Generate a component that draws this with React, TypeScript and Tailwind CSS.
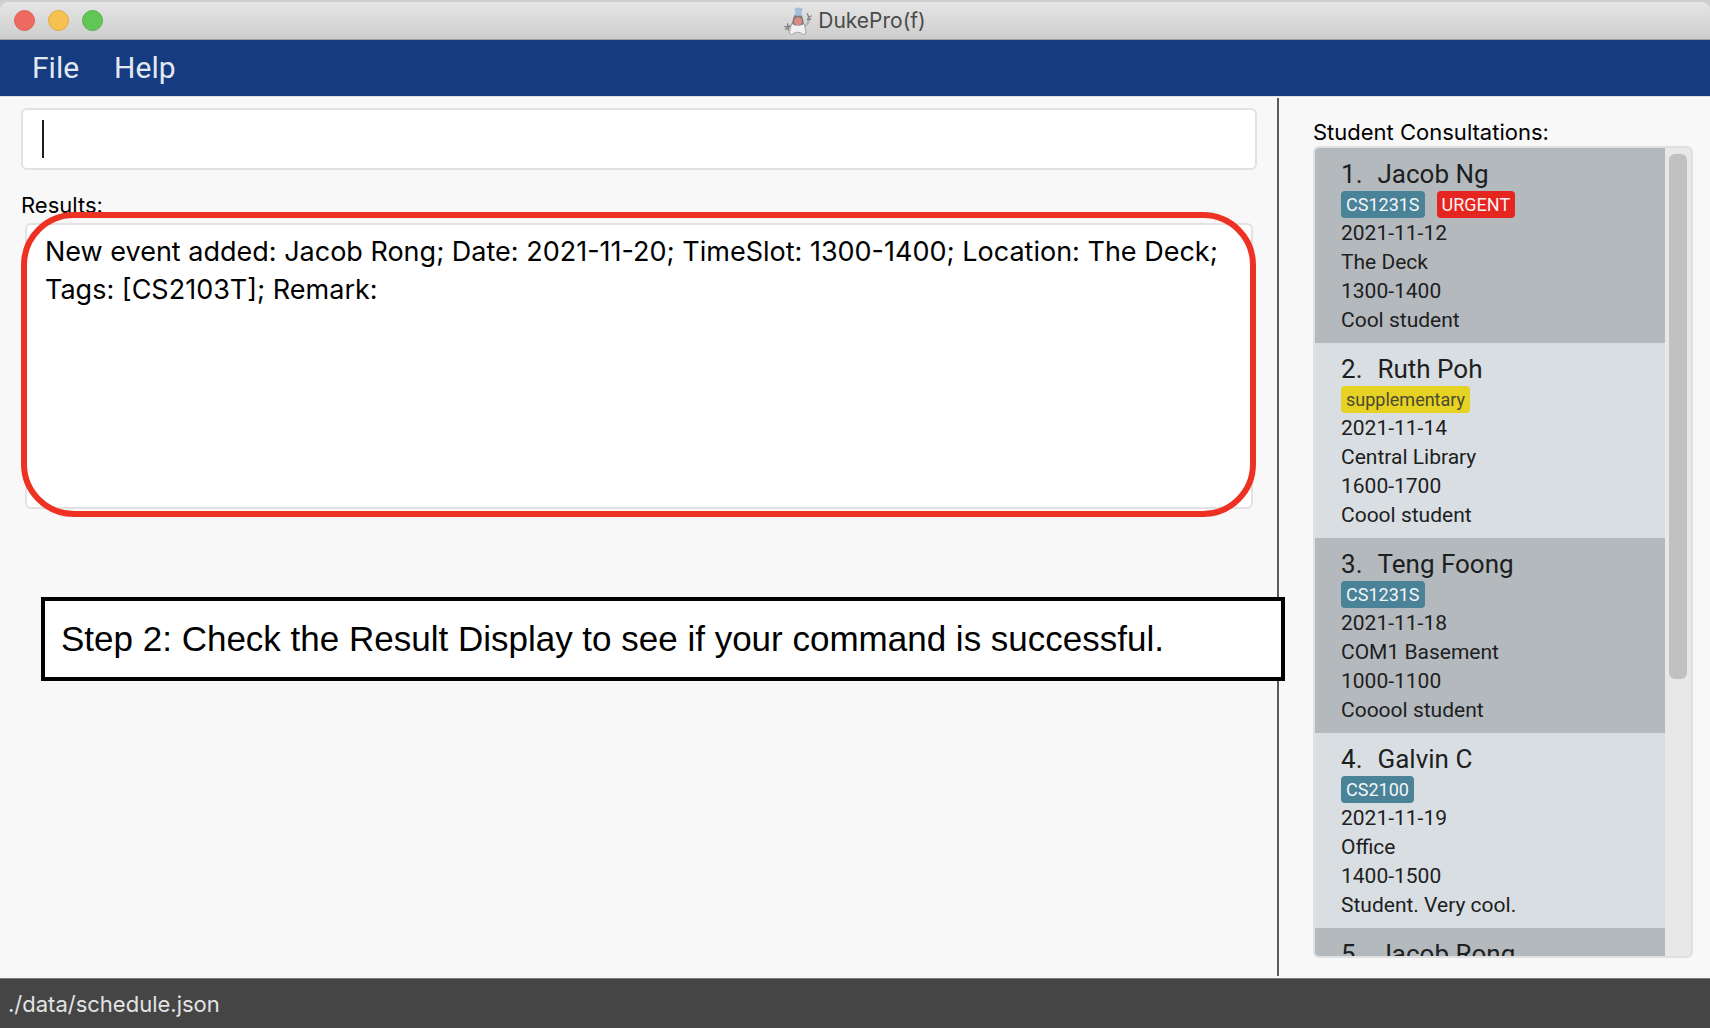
import React from "react";

type Tag = { label: string; kind: "module" | "urgent" | "extra" };
type Consultation = {
  name: string;
  tags: Tag[];
  date: string;
  place: string;
  time: string;
  remark: string;
};

const consultations: Consultation[] = [
  {
    name: "Jacob Ng",
    tags: [
      { label: "CS1231S", kind: "module" },
      { label: "URGENT", kind: "urgent" },
    ],
    date: "2021-11-12",
    place: "The Deck",
    time: "1300-1400",
    remark: "Cool student",
  },
  {
    name: "Ruth Poh",
    tags: [{ label: "supplementary", kind: "extra" }],
    date: "2021-11-14",
    place: "Central Library",
    time: "1600-1700",
    remark: "Coool student",
  },
  {
    name: "Teng Foong",
    tags: [{ label: "CS1231S", kind: "module" }],
    date: "2021-11-18",
    place: "COM1 Basement",
    time: "1000-1100",
    remark: "Cooool student",
  },
  {
    name: "Galvin C",
    tags: [{ label: "CS2100", kind: "module" }],
    date: "2021-11-19",
    place: "Office",
    time: "1400-1500",
    remark: "Student. Very cool.",
  },
  {
    name: "Jacob Rong",
    tags: [],
    date: "",
    place: "",
    time: "",
    remark: "",
  },
];

const tagStyles: Record<Tag["kind"], string> = {
  module: "bg-[#4a8297] text-[#f2f6f7]",
  urgent: "bg-[#e62420] text-[#fdf3f3]",
  extra: "bg-[#e6d222] text-[#4b4936]",
};

function DukeIcon() {
  return (
    <svg viewBox="0 0 84 84" className="size-7" aria-hidden="true">
      <path d="M60 58 C68 54 74 46 76 36" fill="none" stroke="#b4b4b4" strokeWidth="7" strokeLinecap="round" />
      <path d="M14 60 L27 50" stroke="#b4b4b4" strokeWidth="6" strokeLinecap="round" />
      <path d="M26 46 C20 56 16 70 17 81 C24 87 30 75 41 76 C53 75 58 87 65 81 C67 70 63 56 57 46 Z" fill="#f0f0f0" stroke="#a3a3a3" strokeWidth="3" />
      <path d="M33 22 L51 22 C56 31 59 40 59 51 C50 57 33 57 25 51 C25 40 28 31 33 22 Z" fill="#7b7b7b" />
      <path d="M31 6 C38 1 50 1 57 6 L53 13 L53 26 L34 26 L34 13 Z" fill="#a4bedb" />
      <circle cx="42" cy="43" r="12" fill="#dc8883" />
      <path d="M70 20 L74 30 L82 27 M74 30 L71 38 L80 36" fill="none" stroke="#808080" strokeWidth="4" strokeLinecap="round" />
      <path d="M2 59 L17 59 M11 51 L13 69 M5 67 L17 57" fill="none" stroke="#808080" strokeWidth="4" strokeLinecap="round" />
    </svg>
  );
}

function TitleBar() {
  return (
    <header className="bg-[#cfcfcf] pt-0.5">
      <div className="grid h-[38px] grid-cols-[1fr_auto_1fr] items-center rounded-t-lg border-b border-[#9f9f9f] bg-linear-to-b from-[#e6e6e6] to-[#cdcdcd] px-3.5">
        <div className="flex gap-[13px]">
          <button aria-label="Close" className="size-[21px] rounded-full border border-[#dc5f55] bg-[#ed6b60]" />
          <button aria-label="Minimize" className="size-[21px] rounded-full border border-[#e0a93f] bg-[#f6c151]" />
          <button aria-label="Zoom" className="size-[21px] rounded-full border border-[#53b045] bg-[#62c656]" />
        </div>
        <div className="flex items-center gap-1.5">
          <DukeIcon />
          <h1 className="font-[Inter,sans-serif] text-[21px] leading-7 text-[#4b4b4b]">DukePro(f)</h1>
        </div>
      </div>
    </header>
  );
}

function ConsultationItem({ index, item }: { index: number; item: Consultation }) {
  return (
    <li className="px-[26px] pt-2.5 pb-2 text-[21px] leading-[29px] text-[#1c2021] odd:bg-[#b4b9bd] even:bg-[#d9dee2]">
      <h3 className="flex gap-[15px] text-[26px] leading-[33px]">
        <span>{index}.</span>
        <span>{item.name}</span>
      </h3>
      <div className="mb-px flex gap-3">
        {item.tags.map((tag) => (
          <span key={tag.label} className={`rounded px-[5px] text-[18px] leading-[27px] ${tagStyles[tag.kind]}`}>
            {tag.label}
          </span>
        ))}
      </div>
      <p>{item.date}</p>
      <p>{item.place}</p>
      <p>{item.time}</p>
      <p>{item.remark}</p>
    </li>
  );
}

export default function App() {
  return (
    <div className="flex h-screen flex-col overflow-hidden bg-[#f8f8f8] font-[Roboto,sans-serif] text-black">
      <TitleBar />

      <nav className="flex h-14 shrink-0 items-center gap-[35px] bg-[#153b80] px-8 text-[30px] leading-9 text-[#e3e8f1]">
        <button>File</button>
        <button>Help</button>
      </nav>

      <main className="flex min-h-0 flex-1 border-t border-[#dcdfe8]">
        <section className="min-w-0 flex-1 pt-[11px] pr-5 pl-[21px]">
          <div className="relative">
            <input
              aria-label="Command"
              className="block h-[62px] w-full rounded-md border-2 border-[#e2e2e2] bg-white px-5 text-[27px] caret-transparent outline-none"
            />
            <span className="absolute top-3 left-[21px] h-[38px] w-0.5 bg-[#1e1e1e]" />
          </div>

          <label htmlFor="result" className="mt-[21px] block font-[Inter,sans-serif] text-[22px] leading-7">
            Results:
          </label>

          <div className="relative mx-1 mt-1">
            <textarea
              id="result"
              readOnly
              className="block h-[286px] w-full resize-none overflow-hidden rounded-md border-2 border-[#e2e2e2] bg-white px-[18px] pt-2 font-[Inter,sans-serif] text-[27px] leading-[38px] outline-none"
              value="New event added: Jacob Rong; Date: 2021-11-20; TimeSlot: 1300-1400; Location: The Deck; Tags: [CS2103T]; Remark:"
            />
            <div className="pointer-events-none absolute -top-[11px] -right-[3px] -bottom-2 -left-1 rounded-[53px] border-6 border-[#ed3224]" />
          </div>

          <p className="relative z-10 mt-[88px] -mr-7 ml-5 border-4 border-black bg-white px-4 py-[17px] font-['Liberation_Sans',sans-serif] text-[35px] leading-[42px]">
            Step 2: Check the Result Display to see if your command is successful.
          </p>
        </section>

        <div className="mt-px mb-0.5 w-0.5 bg-[#5a5a5a]" />

        <aside className="flex w-[431px] shrink-0 flex-col pt-[21px] pr-[17px] pb-5 pl-[34px]">
          <h2 className="font-[Inter,sans-serif] text-[22px] leading-7">Student Consultations:</h2>
          <div className="flex min-h-0 flex-1 overflow-hidden rounded-md border-2 border-[#e0e0e0] bg-[#e8e8e8]">
            <ol className="min-w-0 flex-1 overflow-hidden">
              {consultations.map((item, i) => (
                <ConsultationItem key={item.name} index={i + 1} item={item} />
              ))}
            </ol>
            <div className="w-[26px] px-1 py-1.5">
              <div className="h-[66%] w-[18px] rounded-md bg-[#c1c1c1]" />
            </div>
          </div>
        </aside>
      </main>

      <footer className="flex h-[50px] shrink-0 items-center border-t border-[#7a7a7a] bg-[#454545] px-2 pt-px font-[Inter,sans-serif] text-[22px] leading-7 text-[#e3e3e3]">
        ./data/schedule.json
      </footer>
    </div>
  );
}
